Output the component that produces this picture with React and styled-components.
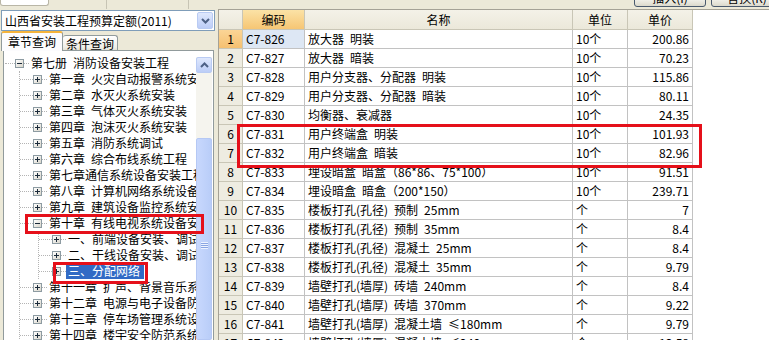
import React from "react";
import styled, { createGlobalStyle, css } from "styled-components";

const GlobalStyle = createGlobalStyle`
  html, body {
    margin: 0;
    padding: 0;
    background: #ece9d8;
  }
  body {
    font-family: "Noto Sans CJK SC", "Liberation Sans", sans-serif;
    font-size: 12px;
    color: #000;
  }
`;

const sp = (s) => s.replace(/ /g, "\u2002");

const tree = [
  {
    label: "第七册 消防设备安装工程",
    open: true,
    children: [
      { label: "第一章 火灾自动报警系统安装工程" },
      { label: "第二章 水灭火系统安装" },
      { label: "第三章 气体灭火系统安装" },
      { label: "第四章 泡沫灭火系统安装" },
      { label: "第五章 消防系统调试" },
      { label: "第六章 综合布线系统工程" },
      { label: "第七章通信系统设备安装工程" },
      { label: "第八章 计算机网络系统设备安装工程" },
      { label: "第九章 建筑设备监控系统安装工程" },
      {
        label: "第十章 有线电视系统设备安装工程",
        open: true,
        children: [
          { label: "一、前端设备安装、调试" },
          { label: "二、干线设备安装、调试" },
          { label: "三、分配网络", selected: true },
        ],
      },
      { label: "第十一章 扩声、背景音乐系统" },
      { label: "第十二章 电源与电子设备防雷接地" },
      { label: "第十三章 停车场管理系统设备安装" },
      { label: "第十四章 楼宇安全防范系统设备安装" },
    ],
  },
];

const rows = [
  ["C7-826", "放大器 明装", "10个", "200.86"],
  ["C7-827", "放大器 暗装", "10个", "70.23"],
  ["C7-828", "用户分支器、分配器 明装", "10个", "115.86"],
  ["C7-829", "用户分支器、分配器 暗装", "10个", "80.11"],
  ["C7-830", "均衡器、衰减器", "10个", "24.35"],
  ["C7-831", "用户终端盒 明装", "10个", "101.93"],
  ["C7-832", "用户终端盒 暗装", "10个", "82.96"],
  ["C7-833", "埋设暗盒 暗盒（86*86、75*100）", "10个", "91.51"],
  ["C7-834", "埋设暗盒 暗盒（200*150）", "10个", "239.71"],
  ["C7-835", "楼板打孔(孔径) 预制 25mm", "个", "7"],
  ["C7-836", "楼板打孔(孔径) 预制 35mm", "个", "8.4"],
  ["C7-837", "楼板打孔(孔径) 混凝土 25mm", "个", "8.4"],
  ["C7-838", "楼板打孔(孔径) 混凝土 35mm", "个", "9.79"],
  ["C7-839", "墙壁打孔(墙厚) 砖墙 240mm", "个", "8.4"],
  ["C7-840", "墙壁打孔(墙厚) 砖墙 370mm", "个", "9.22"],
  ["C7-841", "墙壁打孔(墙厚) 混凝土墙 ≤180mm", "个", "9.79"],
  ["C7-842", "墙壁打孔(墙厚) 混凝土墙 ≤240mm", "个", "13.58"],
];

export default function App() {
  return (
    <>
      <GlobalStyle />
      <Window>
        <TopStrip>
          <StubBox />
          <Sep $w={57} />
          <Sep $w={81} />
          <Spacer />
          <XpButton>插入(I)</XpButton>
          <XpButton $last>替换(R)</XpButton>
        </TopStrip>

        <Body>
          <LeftPane>
            <Combo>
              <ComboText>山西省安装工程预算定额(2011)</ComboText>
              <ComboButton>
                <svg width="9" height="6" viewBox="0 0 9 6">
                  <path d="M1 1 L4.5 4.5 L8 1" fill="none" stroke="#4d6185" strokeWidth="2" />
                </svg>
              </ComboButton>
            </Combo>

            <Tabs>
              <Tab $active>章节查询</Tab>
              <Tab>条件查询</Tab>
            </Tabs>

            <TabPanel>
              <TreeArea>
                {tree.map((n, i) => (
                  <TreeNode key={i} node={n} depth={0} />
                ))}
              </TreeArea>
              <ScrollBar>
                <ScrollBtn>
                  <svg width="9" height="6" viewBox="0 0 9 6">
                    <path d="M1 5 L4.5 1.5 L8 5" fill="none" stroke="#4d6185" strokeWidth="2" />
                  </svg>
                </ScrollBtn>
                <Track />
                <Thumb>
                  <Grip />
                </Thumb>
              </ScrollBar>
            </TabPanel>
          </LeftPane>

          <RightPane>
            <Grid>
              <HeadCell $corner />
              <HeadCell $hot>编码</HeadCell>
              <HeadCell>名称</HeadCell>
              <HeadCell>单位</HeadCell>
              <HeadCell>单价</HeadCell>
              {rows.map((r, i) => (
                <React.Fragment key={r[0]}>
                  <NumCell $hot={i === 0}>{i + 1}</NumCell>
                  <Cell $selected={i === 0}>{r[0]}</Cell>
                  <Cell>{sp(r[1])}</Cell>
                  <Cell>{r[2]}</Cell>
                  <Cell $right>{r[3]}</Cell>
                </React.Fragment>
              ))}
            </Grid>
            <Mark $top={114} $left={18} $w={465} $h={44} />
          </RightPane>
        </Body>

        <Mark $top={214} $left={25} $w={179} $h={20} />
        <Mark $top={262} $left={53} $w={95} $h={22} />
      </Window>
    </>
  );
}

function TreeNode({ node, depth }) {
  const hasKids = node.children && node.children.length > 0;
  return (
    <>
      <TreeRow>
        <Lead $w={depth === 0 ? 10 : 13} />
        <Expander $open={node.open} />
        <Lead $w={5} />
        <Label $selected={node.selected}>{sp(node.label)}</Label>
      </TreeRow>
      {hasKids && node.open && (
        <Children $indent={depth === 0 ? 14 : 18}>
          {node.children.map((c, i) => (
            <TreeNode key={i} node={c} depth={depth + 1} />
          ))}
        </Children>
      )}
    </>
  );
}

const Window = styled.div`
  position: relative;
  width: 769px;
  height: 340px;
  overflow: hidden;
  display: flex;
  flex-direction: column;
  background: #ece9d8;
`;

const TopStrip = styled.div`
  height: 9px;
  flex-shrink: 0;
  display: flex;
  align-items: flex-start;
  overflow: hidden;
`;

const StubBox = styled.div`
  width: 47px;
  height: 5px;
  background: #fff;
  border: 1px solid #b9b6a6;
  border-top: none;
  border-radius: 0 0 3px 3px;
`;

const Sep = styled.div`
  width: ${(p) => p.$w}px;
  height: 9px;
  border-right: 1px solid #c7c4b4;
`;

const Spacer = styled.div`
  flex: 1;
`;

const XpButton = styled.div`
  width: 72px;
  height: 23px;
  margin-top: -16px;
  margin-right: ${(p) => (p.$last ? "-14px" : "5px")};
  box-sizing: border-box;
  border: 1px solid #4a5a6e;
  border-radius: 3px;
  background: linear-gradient(#fefefe, #f0efe8 70%, #dcd9cc);
  display: flex;
  align-items: flex-end;
  justify-content: center;
  padding-bottom: 2px;
  line-height: 13px;
`;

const Body = styled.div`
  flex: 1;
  min-height: 0;
  display: flex;
`;

const LeftPane = styled.div`
  width: 216px;
  flex-shrink: 0;
  display: flex;
  flex-direction: column;
`;

const Combo = styled.div`
  margin: 1px 1px 0 1px;
  height: 21px;
  box-sizing: border-box;
  border: 1px solid #7f9db9;
  background: #fff;
  display: flex;
  align-items: center;
`;

const ComboText = styled.div`
  flex: 1;
  padding-left: 3px;
  white-space: nowrap;
  overflow: hidden;
  line-height: 16px;
`;

const ComboButton = styled.div`
  width: 16px;
  height: 17px;
  margin-right: 1px;
  box-sizing: border-box;
  border: 1px solid #b9cbf3;
  border-radius: 2px;
  background: linear-gradient(#dfe8fd, #bccdf7);
  display: flex;
  align-items: center;
  justify-content: center;
`;

const Tabs = styled.div`
  height: 19px;
  display: flex;
  align-items: flex-end;
  padding-left: 1px;
  position: relative;
  z-index: 1;
`;

const Tab = styled.div`
  box-sizing: border-box;
  border: 1px solid #919b9c;
  border-bottom: none;
  border-radius: 3px 3px 0 0;
  display: flex;
  align-items: center;
  justify-content: center;
  white-space: nowrap;
  ${(p) =>
    p.$active
      ? css`
          width: 62px;
          height: 20px;
          margin-bottom: -1px;
          background: #fcfcfe;
          border-top: 2px solid #f5b43c;
          padding-bottom: 1px;
        `
      : css`
          width: 55px;
          height: 15px;
          background: linear-gradient(#ffffff, #f0efe8 80%, #e3e1d6);
          border-left: none;
        `}
`;

const TabPanel = styled.div`
  flex: 1;
  min-height: 0;
  margin-left: 3px;
  width: 211px;
  box-sizing: border-box;
  border: 1px solid #919b9c;
  border-bottom: none;
  background: #fff;
  display: flex;
  padding-top: 4px;
`;

const TreeArea = styled.div`
  flex: 1;
  min-width: 0;
  overflow: hidden;
  padding-left: 1px;
`;

const TreeRow = styled.div`
  height: 16px;
  display: flex;
  align-items: center;
  white-space: nowrap;
`;

const Lead = styled.span`
  width: ${(p) => p.$w}px;
  flex-shrink: 0;
  height: 0;
  border-top: 1px dotted #b4b4b4;
`;

const Expander = styled.span`
  position: relative;
  flex-shrink: 0;
  width: 9px;
  height: 9px;
  box-sizing: border-box;
  border: 1px solid #8d9ba2;
  background: linear-gradient(135deg, #ffffff, #d9d6cb);

  &::before {
    content: "";
    position: absolute;
    left: 1px;
    top: 3px;
    width: 5px;
    height: 1px;
    background: #1a2a3a;
  }

  &::after {
    content: "";
    position: absolute;
    left: 3px;
    top: 1px;
    width: 1px;
    height: 5px;
    background: #1a2a3a;
    display: ${(p) => (p.$open ? "none" : "block")};
  }
`;

const Label = styled.span`
  padding: 0 2px;
  line-height: 16px;
  ${(p) =>
    p.$selected &&
    css`
      background: #316ac5;
      color: #fff;
      padding: 0 4px 0 2px;
    `}
`;

const Children = styled.div`
  margin-left: ${(p) => p.$indent}px;
  border-left: 1px dotted #b4b4b4;
`;

const ScrollBar = styled.div`
  width: 16px;
  flex-shrink: 0;
  margin: 2px 1px 0 0;
  display: flex;
  flex-direction: column;
  background: #f5f4ee;
`;

const ScrollBtn = styled.div`
  height: 16px;
  box-sizing: border-box;
  border: 1px solid #b9cbf3;
  border-radius: 2px;
  background: linear-gradient(#dfe8fd, #bccdf7);
  display: flex;
  align-items: center;
  justify-content: center;
`;

const Track = styled.div`
  height: 65px;
  flex-shrink: 0;
`;

const Thumb = styled.div`
  flex: 1;
  min-height: 200px;
  box-sizing: border-box;
  border: 1px solid #b5c8f4;
  border-radius: 2px;
  background: linear-gradient(to right, #c8d8fd, #b9cdf8);
  display: flex;
  justify-content: center;
  padding-top: 103px;
`;

const Grip = styled.div`
  width: 7px;
  height: 7px;
  background: repeating-linear-gradient(to bottom, #eef3ff 0 1px, #8aa6e3 1px 2px);
`;

const RightPane = styled.div`
  position: relative;
  flex: 1;
  margin-left: 2px;
  box-sizing: border-box;
  border-top: 1px solid #a5a296;
  border-left: 1px solid #a5a296;
  background: #fff;
  overflow: hidden;
`;

const Grid = styled.div`
  display: grid;
  grid-template-columns: 24px 62px 268px 55px 65px;
  grid-template-rows: 20px;
  grid-auto-rows: 19px;
  width: 474px;
`;

const cellBase = css`
  box-sizing: border-box;
  border-right: 1px solid #c2c2c2;
  border-bottom: 1px solid #c2c2c2;
  white-space: nowrap;
  overflow: hidden;
  line-height: 18px;
`;

const HeadCell = styled.div`
  ${cellBase};
  border-color: #c9c6b6;
  text-align: center;
  line-height: 19px;
  background: ${(p) =>
    p.$hot ? "linear-gradient(#fbe2a6, #f6c674)" : "linear-gradient(#f4f2e8, #ebe8da)"};
`;

const NumCell = styled.div`
  ${cellBase};
  border-color: #c9c6b6;
  text-align: center;
  background: ${(p) => (p.$hot ? "linear-gradient(#fbd596, #f5c070)" : "#eeece1")};
`;

const Cell = styled.div`
  ${cellBase};
  padding: 0 3px;
  text-align: ${(p) => (p.$right ? "right" : "left")};
  background: ${(p) => (p.$selected ? "#dde7f4" : "#fff")};
`;

const Mark = styled.div`
  position: absolute;
  top: ${(p) => p.$top}px;
  left: ${(p) => p.$left}px;
  width: ${(p) => p.$w}px;
  height: ${(p) => p.$h}px;
  box-sizing: border-box;
  border: 3px solid #e5101a;
  pointer-events: none;
  z-index: 5;
`;
